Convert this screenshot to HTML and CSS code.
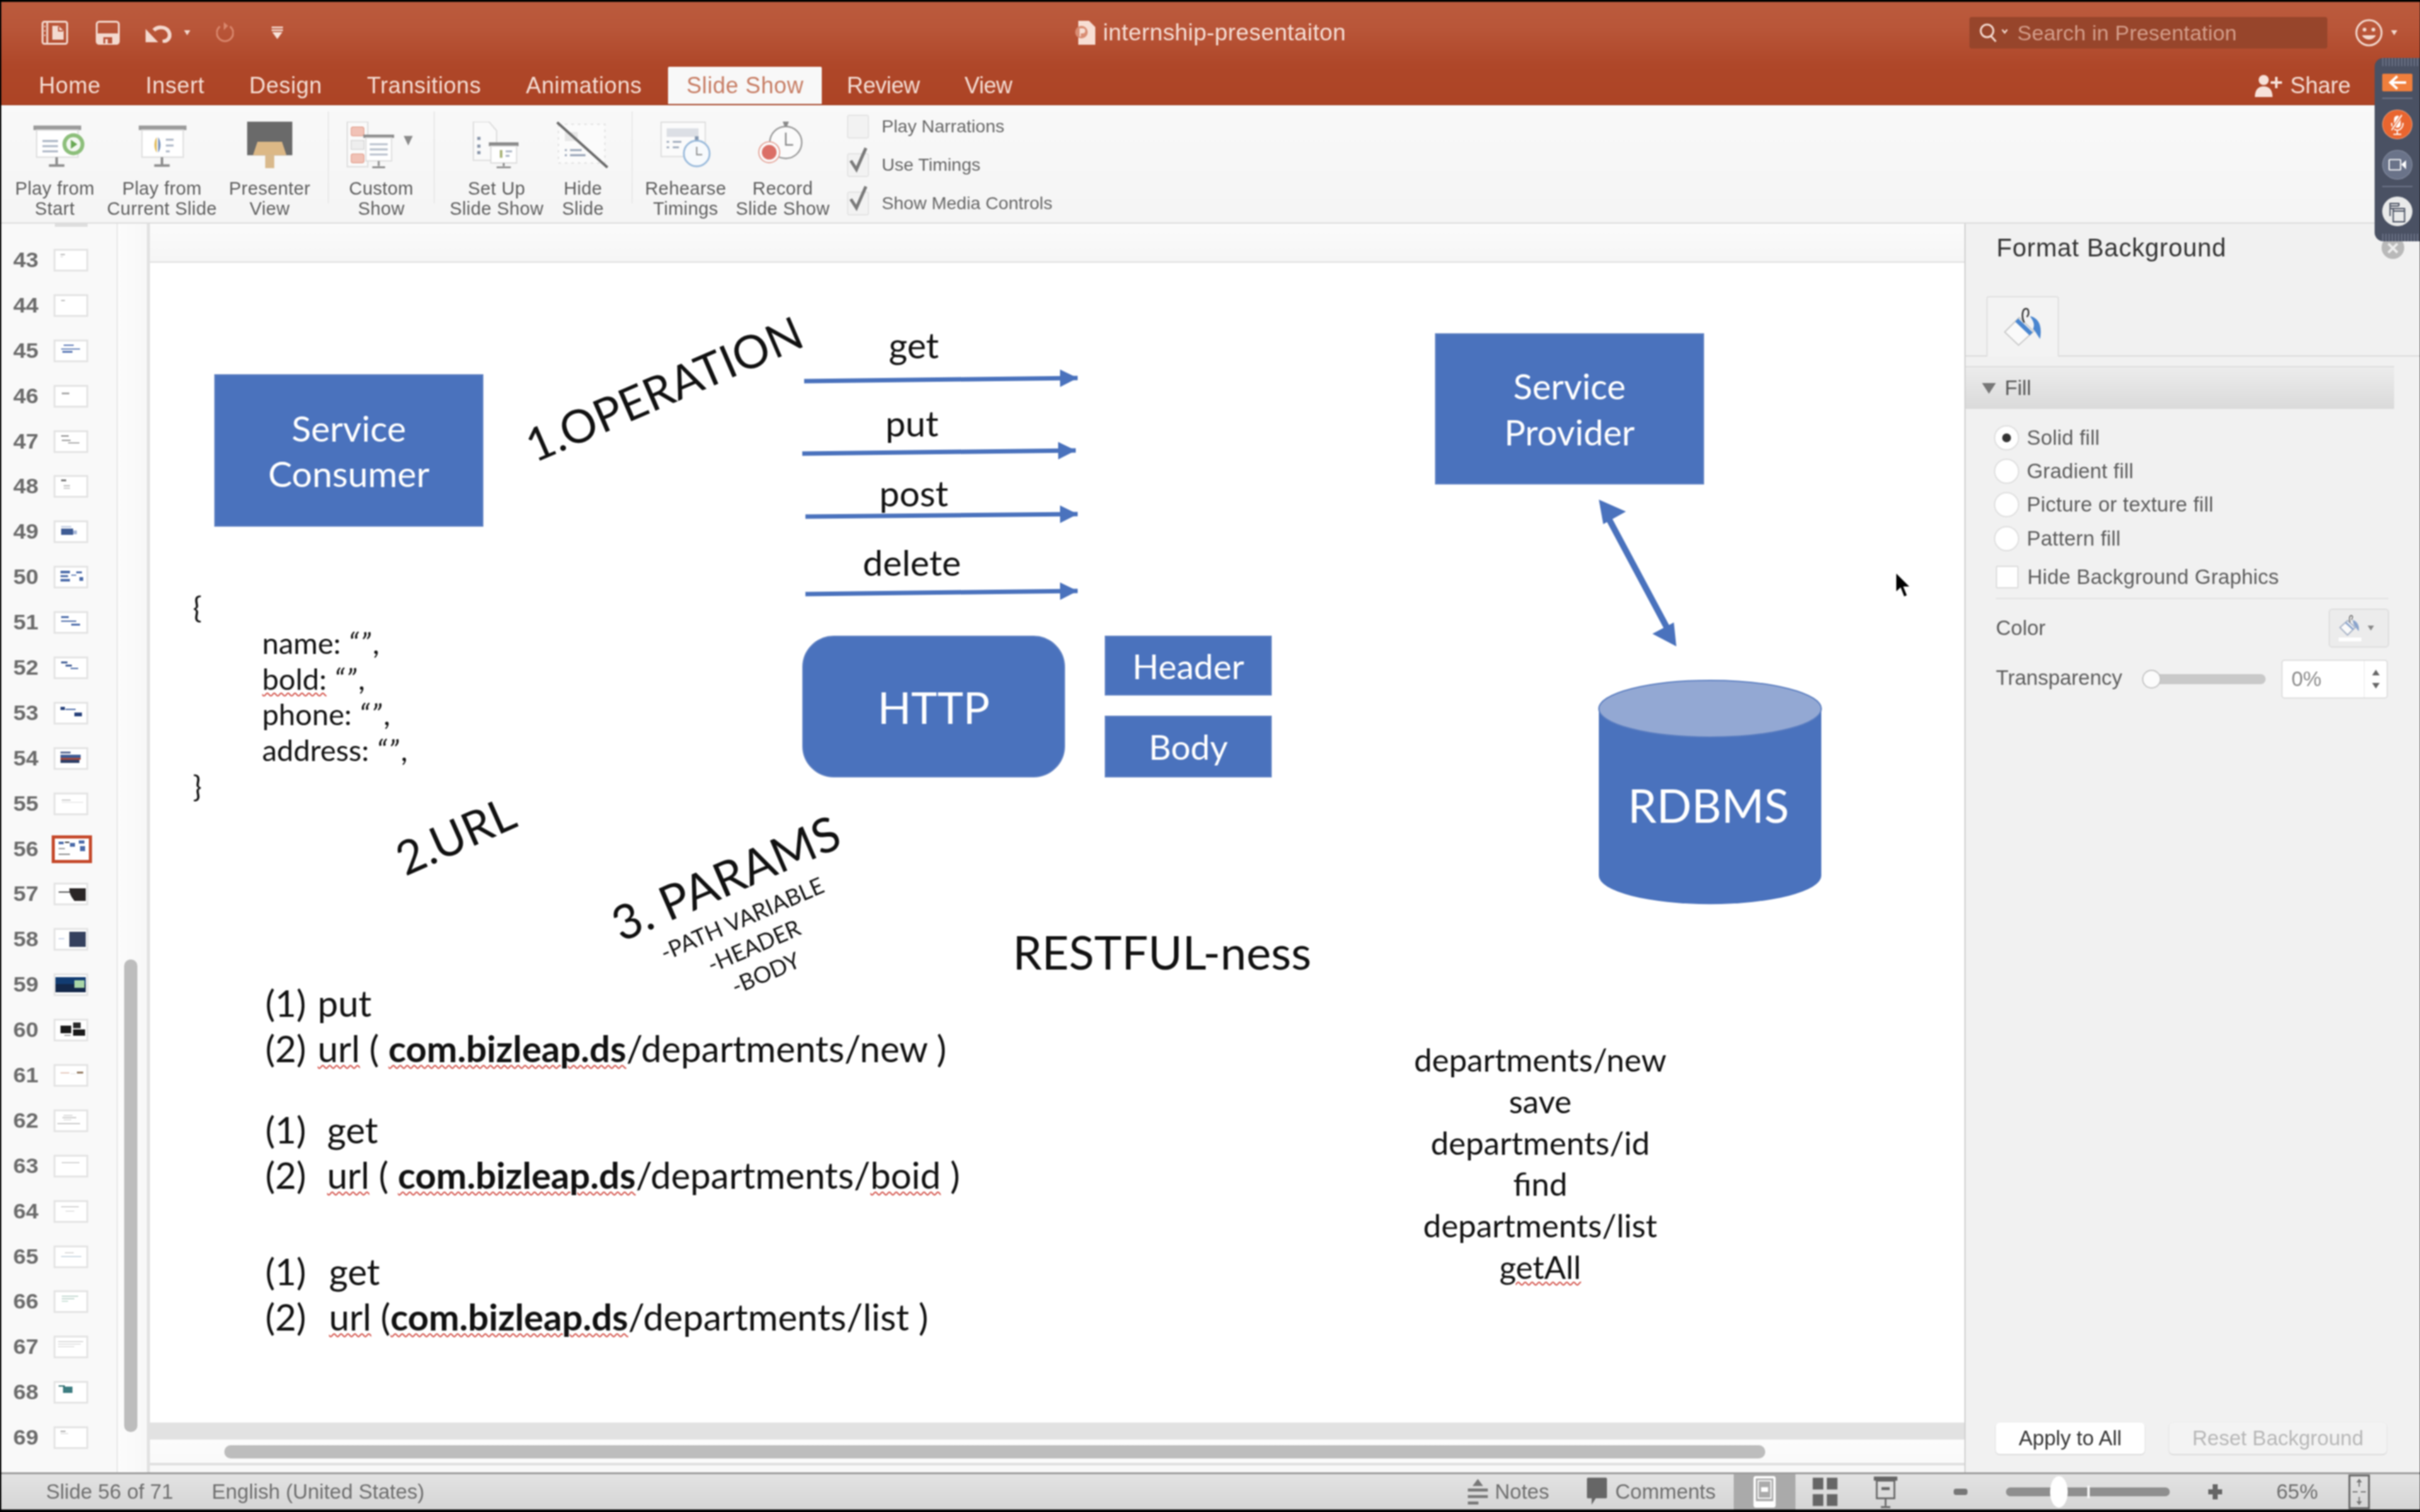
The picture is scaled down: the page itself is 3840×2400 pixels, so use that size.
FILE: index.html
```html
<!DOCTYPE html>
<html lang="en">
<head>
<meta charset="utf-8">
<title>internship-presentaiton</title>
<link rel="stylesheet" href="styles.css">
</head>
<body>
<div class="app">
  <header class="head">
    <div class="titlerow">
      <div class="qat">
        <svg class="q1" viewBox="0 0 42 38"><rect x="1.5" y="1.5" width="39" height="35" rx="3" fill="none" stroke="#f3d9cf" stroke-width="3"/><path d="M9 2v34" stroke="#f3d9cf" stroke-width="3"/><path d="M4 9h2M4 16h2M4 23h2" stroke="#f3d9cf" stroke-width="2"/><path d="M17 8h10l8 8v14H17z" fill="#f3d9cf"/><path d="M27 9v7h7" fill="none" stroke="#b9543a" stroke-width="2"/></svg>
        <svg class="q2" viewBox="0 0 38 38"><rect x="1.5" y="1.5" width="35" height="35" rx="4" fill="none" stroke="#f3d9cf" stroke-width="3"/><rect x="1.5" y="20" width="35" height="16" rx="3" fill="#f3d9cf"/><rect x="12" y="26" width="14" height="10" fill="#b9543a"/><rect x="15" y="29" width="4" height="7" fill="#f3d9cf"/></svg>
        <svg class="q3" viewBox="0 0 42 28"><path d="M14 8C20 2 32 2 37 9C42 17 38 25 28 26" fill="none" stroke="#f3d9cf" stroke-width="6"/><path d="M1 6L1 27L21 27z" fill="#f3d9cf"/></svg>
        <span class="tri q3d"></span>
        <svg class="q4" viewBox="0 0 28 36"><path d="M6 8A13 13 0 1 0 22 8" fill="none" stroke="#d8866c" stroke-width="3"/><path d="M12 1v13l7-7z" fill="#d8866c"/></svg>
        <svg class="q5" viewBox="0 0 22 20"><path d="M2 1.5h18M2 6h18" stroke="#f7e2da" stroke-width="2.5"/><path d="M3 9h16l-8 11z" fill="#f7e2da"/></svg>
      </div>
      <div class="doc">
        <svg class="docicon" viewBox="0 0 32 38"><path d="M5 0h17l10 10v28H5z" fill="#f7ded4"/><circle cx="10" cy="18" r="10" fill="#d98d74"/><path d="M7 12h5a4 4 0 0 1 0 8H9v5H7z" fill="#f7ded4"/></svg>
        <span class="doctitle">internship-presentaiton</span>
      </div>
      <div class="rightbar">
        <div class="search">
          <svg class="mag" viewBox="0 0 46 30"><circle cx="12" cy="12" r="10" fill="none" stroke="#f3d9cf" stroke-width="3"/><path d="M18 20l8 9" stroke="#f3d9cf" stroke-width="3"/><path d="M36 10l4 5 4-5" fill="none" stroke="#f3d9cf" stroke-width="2.5"/></svg>
          <span class="searchtext">Search in Presentation</span>
        </div>
        <svg class="smile" viewBox="0 0 44 44"><circle cx="22" cy="22" r="20" fill="none" stroke="#f3d9cf" stroke-width="3"/><circle cx="15" cy="17" r="3" fill="#f3d9cf"/><circle cx="29" cy="17" r="3" fill="#f3d9cf"/><path d="M11 26c4 9 18 9 22 0z" fill="#f3d9cf"/></svg>
        <span class="tri smiled"></span>
      </div>
    </div>
    <div class="tabsrow">
      <nav class="tabs">
        <span class="tab">Home</span>
        <span class="tab">Insert</span>
        <span class="tab">Design</span>
        <span class="tab">Transitions</span>
        <span class="tab">Animations</span>
        <span class="tab active">Slide Show</span>
        <span class="tab tight">Review</span>
        <span class="tab tight">View</span>
      </nav>
      <div class="share">
        <svg class="shareicon" viewBox="0 0 46 36"><circle cx="15" cy="9" r="8" fill="#f7e2da"/><path d="M1 36c0-12 6-17 14-17s14 5 14 17z" fill="#f7e2da"/><path d="M35 4v18M26 13h18" stroke="#f7e2da" stroke-width="4"/></svg>
        <span>Share</span>
      </div>
    </div>
  </header>

  <section class="ribbon">
    <div class="rb w170">
      <svg class="rbi first" viewBox="0 0 84 72"><rect x="2" y="6" width="74" height="7" fill="#9a9a9a"/><rect x="7" y="13" width="64" height="42" fill="#fff" stroke="#ddd" stroke-width="2"/><path d="M16 30h24M16 38h24M16 46h24" stroke="#aab4c4" stroke-width="3"/><circle cx="64" cy="35" r="17" fill="#8dbf7b"/><circle cx="64" cy="35" r="11" fill="#f4f8f2"/><path d="M60 28l10 7-10 7z" fill="#6aa955"/><path d="M38 55v11M26 68h24" stroke="#8d8d8d" stroke-width="4"/></svg>
      <span class="rbl">Play from<br>Start</span>
    </div>
    <div class="rb w170">
      <svg class="rbi" viewBox="0 0 84 72"><rect x="6" y="6" width="74" height="7" fill="#9a9a9a"/><rect x="11" y="13" width="64" height="42" fill="#fff" stroke="#ddd" stroke-width="2"/><path d="M34 24c-5 6-5 18 0 24z" fill="#e2bd5f"/><path d="M36 24c5 6 5 18 0 24z" fill="#7791ba"/><path d="M48 28h12M48 37h12M48 46h6" stroke="#aab4c4" stroke-width="3"/><path d="M42 55v11M30 68h24" stroke="#8d8d8d" stroke-width="4"/></svg>
      <span class="rbl">Play from<br>Current Slide</span>
    </div>
    <div class="rb w172">
      <svg class="rbi" viewBox="0 0 84 72"><rect x="7" y="0" width="70" height="52" fill="#6a6a6a"/><path d="M23 31h38l7 21H16z" fill="#dcb886"/><rect x="35" y="52" width="14" height="20" fill="#d9b98c"/></svg>
      <span class="rbl">Presenter<br>View</span>
    </div>
    <i class="rsep"></i>
    <div class="rb w154">
      <svg class="rbi wide" viewBox="0 0 110 72"><rect x="2" y="0" width="32" height="70" fill="#fafafa" stroke="#ddd" stroke-width="2"/><rect x="8" y="8" width="20" height="14" rx="3" fill="#f1c2b6" stroke="#dd8f7b"/><rect x="8" y="29" width="20" height="14" fill="#eee" stroke="#ccc"/><rect x="8" y="50" width="20" height="14" rx="3" fill="#f1c2b6" stroke="#dd8f7b"/><rect x="27" y="20" width="48" height="5" fill="#8a8a8a"/><rect x="31" y="25" width="40" height="36" fill="#fff" stroke="#ddd" stroke-width="2"/><path d="M37 35h28M37 43h28M37 51h28" stroke="#b7bfcc" stroke-width="3"/><path d="M51 61v8M41 71h20" stroke="#8d8d8d" stroke-width="3"/><path d="M90 22h14l-7 15z" fill="#8a8a8a"/></svg>
      <span class="rbl">Custom<br>Show</span>
    </div>
    <i class="rsep"></i>
    <div class="rb w184">
      <svg class="rbi" viewBox="0 0 84 72"><path d="M6 0h24l12 14v46H6z" fill="#fafafa" stroke="#ddd" stroke-width="2"/><path d="M12 26h5M12 38h5M12 48h5" stroke="#8794a8" stroke-width="5"/><rect x="30" y="32" width="46" height="6" fill="#8a8a8a"/><rect x="33" y="38" width="40" height="26" fill="#fff" stroke="#ddd" stroke-width="2"/><rect x="47" y="44" width="4" height="12" fill="#a9b377"/><path d="M56 46h10M56 53h6" stroke="#aab4c4" stroke-width="3"/><path d="M53 64v5M42 71h22" stroke="#8d8d8d" stroke-width="3"/></svg>
      <span class="rbl">Set Up<br>Slide Show</span>
    </div>
    <div class="rb w90">
      <svg class="rbi" viewBox="0 0 84 72"><rect x="4" y="4" width="72" height="60" fill="#fbfbfb" stroke="#e0e0e0" stroke-width="2" stroke-dasharray="4 6"/><rect x="14" y="16" width="20" height="14" fill="#e8e8e8"/><path d="M14 44h3M22 44h18M14 52h3M22 52h24" stroke="#99a5b8" stroke-width="3"/><path d="M2 1l78 70" stroke="#6b6b6b" stroke-width="4"/></svg>
      <span class="rbl">Hide<br>Slide</span>
    </div>
    <i class="rsep"></i>
    <div class="rb w156">
      <svg class="rbi" viewBox="0 0 84 76"><rect x="2" y="1" width="72" height="56" fill="#fbfbfb" stroke="#ddd" stroke-width="2"/><rect x="11" y="11" width="52" height="14" fill="#dcdfe5"/><path d="M11 33h4M21 33h14M11 42h4M21 42h10" stroke="#99a5b8" stroke-width="3"/><circle cx="60" cy="52" r="21" fill="#f7fafd" stroke="#9bbbdc" stroke-width="3"/><path d="M57 24h6v6h-6z" fill="#8295ad"/><path d="M60 41v13h9" fill="none" stroke="#8a8a8a" stroke-width="2"/></svg>
      <span class="rbl">Rehearse<br>Timings</span>
    </div>
    <div class="rb w152">
      <svg class="rbi" viewBox="0 0 84 76"><circle cx="47" cy="34" r="26" fill="#fbfbfb" stroke="#9a9a9a" stroke-width="2.5"/><path d="M42 0h10l-3 8h-4z" fill="#8a8a8a"/><path d="M47 18v20h12" fill="none" stroke="#8a8a8a" stroke-width="2.5"/><circle cx="20" cy="50" r="17" fill="#fbfbfb" stroke="#e4a296" stroke-width="2"/><circle cx="20" cy="50" r="12" fill="#db6f66"/></svg>
      <span class="rbl">Record<br>Slide Show</span>
    </div>
    <div class="checks">
      <label class="chk"><span class="cb"></span><span>Play Narrations</span></label>
      <label class="chk"><span class="cb"><svg class="tick" viewBox="0 0 36 44"><path d="M6 22l9 14 15-34" fill="none" stroke="#7a7a7a" stroke-width="5"/></svg></span><span>Use Timings</span></label>
      <label class="chk"><span class="cb"><svg class="tick" viewBox="0 0 36 44"><path d="M6 22l9 14 15-34" fill="none" stroke="#7a7a7a" stroke-width="5"/></svg></span><span>Show Media Controls</span></label>
    </div>
  </section>

  <main class="main">
    <aside class="thumbs">
      <div class="cut"></div>
      <div class="row"><b>43</b><span class="th"><svg viewBox="0 0 49 30"><rect x="8" y="5" width="7" height="2" fill="#bbb"/><rect x="8" y="9" width="4" height="1" fill="#ccc"/></svg></span></div>
      <div class="row"><b>44</b><span class="th"><svg viewBox="0 0 49 30"><rect x="9" y="6" width="6" height="2" fill="#bbb"/></svg></span></div>
      <div class="row"><b>45</b><span class="th"><svg viewBox="0 0 49 30"><rect x="13" y="5" width="16" height="2" fill="#5a78b5"/><rect x="9" y="11" width="30" height="2" fill="#6a86bd"/><rect x="11" y="15" width="16" height="3" fill="#5a78b5"/></svg></span></div>
      <div class="row"><b>46</b><span class="th"><svg viewBox="0 0 49 30"><rect x="10" y="9" width="12" height="3" fill="#aaa"/></svg></span></div>
      <div class="row"><b>47</b><span class="th"><svg viewBox="0 0 49 30"><rect x="9" y="5" width="12" height="2" fill="#888"/><rect x="10" y="12" width="14" height="2" fill="#999"/><rect x="20" y="16" width="18" height="2" fill="#aaa"/></svg></span></div>
      <div class="row"><b>48</b><span class="th"><svg viewBox="0 0 49 30"><rect x="9" y="4" width="8" height="3" fill="#777"/><rect x="13" y="13" width="10" height="2" fill="#bbb"/><rect x="13" y="17" width="10" height="2" fill="#ccc"/></svg></span></div>
      <div class="row"><b>49</b><span class="th"><svg viewBox="0 0 49 30"><rect x="9" y="6" width="16" height="2" fill="#b8c4dc"/><rect x="9" y="10" width="19" height="10" fill="#3f5c94"/><rect x="28" y="13" width="6" height="6" fill="#a8b8d8"/></svg></span></div>
      <div class="row"><b>50</b><span class="th"><svg viewBox="0 0 49 30"><rect x="8" y="5" width="15" height="4" fill="#4a6aa8"/><rect x="8" y="12" width="12" height="3" fill="#4a6aa8"/><rect x="8" y="18" width="15" height="4" fill="#4a6aa8"/><rect x="25" y="11" width="8" height="2" fill="#6a86bd"/><rect x="33" y="6" width="9" height="3" fill="#4a6aa8"/><rect x="38" y="15" width="6" height="6" fill="#4a6aa8"/></svg></span></div>
      <div class="row"><b>51</b><span class="th"><svg viewBox="0 0 49 30"><rect x="9" y="5" width="12" height="3" fill="#4a6aa8"/><rect x="9" y="12" width="24" height="2" fill="#4a6aa8"/><rect x="25" y="17" width="14" height="3" fill="#4a6aa8"/></svg></span></div>
      <div class="row"><b>52</b><span class="th"><svg viewBox="0 0 49 30"><rect x="9" y="5" width="10" height="3" fill="#3f5c94"/><rect x="16" y="10" width="10" height="3" fill="#3f5c94"/><rect x="24" y="15" width="12" height="2" fill="#4a6aa8"/></svg></span></div>
      <div class="row"><b>53</b><span class="th"><svg viewBox="0 0 49 30"><rect x="8" y="5" width="7" height="5" fill="#27417a"/><rect x="16" y="8" width="16" height="2" fill="#4a6aa8"/><rect x="30" y="14" width="12" height="6" fill="#27417a"/></svg></span></div>
      <div class="row"><b>54</b><span class="th"><svg viewBox="0 0 49 30"><rect x="8" y="4" width="16" height="3" fill="#5a6c94"/><rect x="8" y="9" width="32" height="5" fill="#3f5c94"/><rect x="8" y="14" width="32" height="3" fill="#a8483a"/><rect x="8" y="17" width="30" height="5" fill="#2f3f66"/></svg></span></div>
      <div class="row"><b>55</b><span class="th"><svg viewBox="0 0 49 30"><rect x="10" y="8" width="14" height="2" fill="#ccc"/><rect x="10" y="12" width="34" height="1" fill="#ddd"/></svg></span></div>
      <div class="row current"><b>56</b><span class="th"><svg viewBox="0 0 54 34"><rect x="6" y="5" width="8" height="4" fill="#4a6aa8"/><rect x="16" y="5" width="7" height="2" fill="#333"/><rect x="24" y="7" width="8" height="6" fill="#4a6aa8"/><rect x="38" y="3" width="9" height="5" fill="#4a6aa8"/><rect x="40" y="12" width="8" height="8" fill="#4a6aa8"/><rect x="6" y="15" width="10" height="2" fill="#999"/><rect x="6" y="24" width="18" height="2" fill="#888"/></svg></span></div>
      <div class="row"><b>57</b><span class="th"><svg viewBox="0 0 49 30"><rect x="5" y="11" width="18" height="2" fill="#555"/><path d="M22 6h26v20H30c-4-6-8-10-8-20z" fill="#2a2626"/></svg></span></div>
      <div class="row"><b>58</b><span class="th"><svg viewBox="0 0 49 30"><rect x="5" y="13" width="9" height="2" fill="#c9d4ea"/><rect x="22" y="3" width="26" height="24" fill="#35415e"/></svg></span></div>
      <div class="row"><b>59</b><span class="th"><svg viewBox="0 0 49 30"><rect x="0" y="3" width="48" height="24" fill="#123c72"/><rect x="0" y="14" width="48" height="13" fill="#14284a"/><rect x="30" y="8" width="16" height="12" fill="#a9d6a8"/></svg></span></div>
      <div class="row"><b>60</b><span class="th"><svg viewBox="0 0 49 30"><rect x="8" y="8" width="17" height="12" fill="#1a1a1a"/><rect x="28" y="3" width="12" height="9" fill="#2a2a2a"/><rect x="28" y="14" width="19" height="10" fill="#1a1a1a"/><rect x="14" y="23" width="10" height="1" fill="#555"/></svg></span></div>
      <div class="row"><b>61</b><span class="th"><svg viewBox="0 0 49 30"><rect x="8" y="10" width="14" height="2" fill="#e5c9bc"/><rect x="24" y="12" width="8" height="1" fill="#ddd"/><rect x="34" y="9" width="10" height="3" fill="#90765c"/></svg></span></div>
      <div class="row"><b>62</b><span class="th"><svg viewBox="0 0 49 30"><rect x="13" y="6" width="14" height="1" fill="#bbb"/><rect x="11" y="9" width="22" height="2" fill="#ccc"/><rect x="13" y="13" width="12" height="1" fill="#ccc"/><rect x="3" y="19" width="36" height="1" fill="#999"/></svg></span></div>
      <div class="row"><b>63</b><span class="th"><svg viewBox="0 0 49 30"><rect x="10" y="9" width="28" height="1" fill="#aaa"/></svg></span></div>
      <div class="row"><b>64</b><span class="th"><svg viewBox="0 0 49 30"><rect x="9" y="7" width="28" height="1" fill="#aaa"/><rect x="16" y="14" width="14" height="1" fill="#ccc"/></svg></span></div>
      <div class="row"><b>65</b><span class="th"><svg viewBox="0 0 49 30"><rect x="15" y="8" width="14" height="1" fill="#bbb"/><rect x="9" y="14" width="32" height="1" fill="#9fb8c8"/></svg></span></div>
      <div class="row"><b>66</b><span class="th"><svg viewBox="0 0 49 30"><rect x="10" y="6" width="26" height="1" fill="#8fb8a8"/><rect x="10" y="10" width="20" height="1" fill="#8fb8a8"/><rect x="10" y="14" width="10" height="1" fill="#9fc8b8"/></svg></span></div>
      <div class="row"><b>67</b><span class="th"><svg viewBox="0 0 49 30"><rect x="4" y="6" width="40" height="1" fill="#bbb"/><rect x="4" y="10" width="36" height="1" fill="#ccc"/><rect x="4" y="14" width="26" height="1" fill="#ccc"/></svg></span></div>
      <div class="row"><b>68</b><span class="th"><svg viewBox="0 0 49 30"><rect x="5" y="4" width="10" height="2" fill="#2c6b6b"/><rect x="12" y="6" width="15" height="10" fill="#3c7c80"/></svg></span></div>
      <div class="row"><b>69</b><span class="th"><svg viewBox="0 0 49 30"><rect x="8" y="4" width="8" height="2" fill="#aaa"/><rect x="8" y="8" width="12" height="1" fill="#ccc"/></svg></span></div>
    </aside>
    <div class="vscroll"><div class="vthumb"></div></div>

    <div class="editor">
      <div class="stagetop"></div>
      <div class="slide">
        <svg class="lines" viewBox="238 417 2879 1841">
          <defs>
            <marker id="ah" markerWidth="5" markerHeight="5" refX="4" refY="2" orient="auto-start-reverse"><path d="M0 0L4 2L0 4z" fill="#4a72bd"/></marker>
          </defs>
          <path class="ln1" d="M1276 605L1710 600" marker-end="url(#ah)"/>
          <path class="ln1" d="M1273 720L1707 715" marker-end="url(#ah)"/>
          <path class="ln1" d="M1278 820L1710 816" marker-end="url(#ah)"/>
          <path class="ln1" d="M1278 943L1710 938" marker-end="url(#ah)"/>
          <path class="ln2" d="M2552 822L2646 998"/>
          <path d="M2537 793L2580 812L2544 832z" fill="#4a72bd"/>
          <path d="M2660 1026L2622 1006L2656 988z" fill="#4a72bd"/>
          <path d="M2537 1125V1390A176 45 0 0 0 2890 1390V1125z" fill="#4a72bd"/>
          <ellipse cx="2713.5" cy="1125" rx="176.5" ry="45" fill="#93a8d3" stroke="#5a7dc0" stroke-width="2"/>
        </svg>

        <div class="box consumer">Service<br>Consumer</div>
        <div class="box provider">Service<br>Provider</div>
        <div class="box http">HTTP</div>
        <div class="box hdr">Header</div>
        <div class="box bdy">Body</div>
        <div class="rdb">RDBMS</div>

        <div class="rot op">1.OPERATION</div>
        <div class="rot url">2.URL</div>
        <div class="rot par">3. PARAMS</div>
        <div class="rot sub">-PATH VARIABLE<br>-HEADER<br>-BODY</div>

        <div class="verb v1">get</div>
        <div class="verb v2">put</div>
        <div class="verb v3">post</div>
        <div class="verb v4">delete</div>

        <div class="json">
          <p>{</p>
          <p class="ind">name: <span class="q">“”</span>,</p>
          <p class="ind"><span class="sp">bold:</span> <span class="q">“”</span>,</p>
          <p class="ind">phone: <span class="q">“”</span>,</p>
          <p class="ind">address: <span class="q">“”</span>,</p>
          <p>}</p>
        </div>

        <div class="rest">RESTFUL-ness</div>

        <div class="list l1">
          <p><span class="num n1">(1)</span>put</p>
          <p><span class="num n1">(2)</span><span class="sp">url</span> ( <b class="sp">com.bizleap.ds</b>/departments/new )</p>
        </div>
        <div class="list l2">
          <p><span class="num n2">(1)</span>get</p>
          <p><span class="num n2">(2)</span><span class="sp">url</span> ( <b class="sp">com.bizleap.ds</b>/departments/<span class="sp">boid</span> )</p>
        </div>
        <div class="list l3">
          <p><span class="num n3">(1)</span>get</p>
          <p><span class="num n3">(2)</span><span class="sp">url</span> (<b class="sp">com.bizleap.ds</b>/departments/list )</p>
        </div>

        <div class="paths">
          <p>departments/new</p>
          <p>save</p>
          <p>departments/id</p>
          <p>find</p>
          <p>departments/list</p>
          <p><span class="sp">getAll</span></p>
        </div>

        <svg class="cursor" viewBox="0 0 32 46"><path d="M3 2V35L10.500 28L16 42L22 39.500L16.500 26H27z" fill="#000" stroke="#fff" stroke-width="2"/></svg>
      </div>
      <div class="hband"></div>
      <div class="hscroll"><div class="hthumb"></div></div>
    </div>

    <aside class="pane">
      <div class="panehead">
        <span class="panetitle">Format Background</span>
        <span class="paneclose">×</span>
      </div>
      <div class="panetabs">
        <div class="panetab">
          <svg class="bucket" viewBox="0 0 62 62"><path d="M2 39L25 16L48 38L24 60z" fill="#fafafa" stroke="#c9c9c9" stroke-width="2"/><path d="M21 20L44 42" stroke="#4a86d0" stroke-width="7"/><path d="M33 24C28 14 30 2 36 2C41 2 41 12 37 15" fill="none" stroke="#333" stroke-width="2.500"/><path d="M42 14C56 16 62 30 58 50C54 44 52 40 47 34C50 28 48 22 42 14z" fill="#4a86d0"/></svg>
        </div>
      </div>
      <div class="fillbar"><span class="tri filltri"></span><span>Fill</span></div>
      <div class="fills">
        <div class="opt"><span class="radio on"></span><span>Solid fill</span></div>
        <div class="opt"><span class="radio"></span><span>Gradient fill</span></div>
        <div class="opt"><span class="radio"></span><span>Picture or texture fill</span></div>
        <div class="opt"><span class="radio"></span><span>Pattern fill</span></div>
        <div class="opt hide"><span class="square"></span><span>Hide Background Graphics</span></div>
      </div>
      <div class="panesep"></div>
      <div class="colorrow">
        <span>Color</span>
        <div class="colorbtn">
          <svg class="bucketsm" viewBox="0 0 36 42"><path d="M2 20L14 9L26 20L14 32z" fill="#fafafa" stroke="#a9b4c8" stroke-width="2"/><path d="M11 12L23 23" stroke="#8aa4cc" stroke-width="3"/><path d="M18 12C16 6 17 1 20 1C23 1 22 6 20 8" fill="none" stroke="#666" stroke-width="1.500"/><path d="M22 8C30 10 33 18 32 26C28 22 26 18 24 16z" fill="#8aa4cc"/><rect x="0" y="36" width="36" height="6" fill="#fff"/></svg>
          <span class="tri colortri"></span>
        </div>
      </div>
      <div class="transrow">
        <span class="translabel">Transparency</span>
        <div class="track"><span class="knob"></span></div>
        <div class="pct">
          <span class="pctval">0%</span>
          <span class="stepper"><span class="up"></span><span class="dn"></span></span>
        </div>
      </div>
      <div class="panebtns">
        <span class="pbtn apply">Apply to All</span>
        <span class="pbtn reset">Reset Background</span>
      </div>
    </aside>
  </main>

  <footer class="status">
    <span class="stat s1">Slide 56 of 71</span>
    <span class="stat s2">English (United States)</span>
    <div class="stright">
      <svg class="sic notesic" viewBox="0 0 34 60"><path d="M17 8l9 12H8z" fill="#777"/><path d="M0 27h34M0 38h34" stroke="#777" stroke-width="5"/><path d="M0 49h18" stroke="#777" stroke-width="5"/></svg>
      <span class="stat notes">Notes</span>
      <svg class="sic commic" viewBox="0 0 36 60"><path d="M3 6h30a2 2 0 0 1 2 2V39a2 2 0 0 1-2 2H16L9 52V41H3a2 2 0 0 1-2-2V8a2 2 0 0 1 2-2z" fill="#666"/></svg>
      <span class="stat comments">Comments</span>
      <div class="viewon"><svg class="vn" viewBox="0 0 38 54"><rect x="2" y="2" width="34" height="50" rx="2" fill="none" stroke="#fff" stroke-width="4"/><rect x="8" y="8" width="22" height="30" fill="none" stroke="#fff" stroke-width="2"/><rect x="13" y="19" width="12" height="8" fill="#fff"/><rect x="2" y="43" width="34" height="9" fill="#fff"/></svg></div>
      <svg class="sic gridic" viewBox="0 0 42 60"><rect x="0" y="6" width="18" height="20" fill="#666"/><rect x="24" y="6" width="18" height="20" fill="#666"/><rect x="0" y="34" width="18" height="20" fill="#666"/><rect x="24" y="34" width="18" height="20" fill="#666"/></svg>
      <svg class="sic presic" viewBox="0 0 40 60"><rect x="0" y="4" width="40" height="7" fill="#666"/><rect x="5" y="11" width="30" height="30" fill="none" stroke="#666" stroke-width="3"/><path d="M13 22h14v5H13z" fill="#666"/><path d="M20 41v13M12 56h16" stroke="#666" stroke-width="3"/></svg>
      <i class="zminus"></i>
      <div class="zslider"><i class="ztick"></i><i class="zknob"></i></div>
      <i class="zplus"></i>
      <span class="stat zoomv">65%</span>
      <svg class="sic fitic" viewBox="0 0 35 56"><rect x="2" y="2" width="31" height="52" fill="none" stroke="#666" stroke-width="3"/><path d="M17.500 8v12M17.500 36v12M7 28h8M20 28h8" stroke="#777" stroke-width="2"/><path d="M13 13l4.500-6 4.500 6zM13 43l4.500 6 4.500-6z" fill="#777"/></svg>
    </div>
  </footer>

  <div class="floatbar">
    <div class="grip"></div>
    <div class="fb back"><svg viewBox="0 0 48 28"><path d="M38 14H14M24 4L13 14l11 10" fill="none" stroke="#fff" stroke-width="4"/></svg></div>
    <div class="fbsep"></div>
    <div class="fb circ mic"><svg viewBox="0 0 47 47"><rect x="18" y="9" width="11" height="20" rx="5.500" fill="#fff"/><path d="M14 21c0 16 19 16 19 0M23.500 33v6M17 40h13" fill="none" stroke="#fff" stroke-width="2"/><path d="M14 33L31 8" stroke="#e9652f" stroke-width="5"/><path d="M14 33L31 8" stroke="#fff" stroke-width="2"/></svg></div>
    <div class="fb circ cam"><svg viewBox="0 0 47 47"><rect x="10" y="15" width="19" height="17" rx="1" fill="none" stroke="#fff" stroke-width="2"/><path d="M30 23l8-7v15z" fill="#fff"/></svg></div>
    <div class="fbsep"></div>
    <div class="fb circ copy"><svg viewBox="0 0 47 47"><path d="M12 31V11h14v4" fill="none" stroke="#454c5e" stroke-width="2"/><path d="M12 15h14M12 19h5" stroke="#454c5e" stroke-width="2"/><rect x="17" y="19" width="18" height="21" fill="none" stroke="#454c5e" stroke-width="2"/><path d="M17 23h18" stroke="#454c5e" stroke-width="2"/></svg></div>
    <div class="grip low"></div>
  </div>
</div>
</body>
</html>
```

FILE: styles.css
```css
* { box-sizing: border-box; }
html, body { margin: 0; padding: 0; background: #000; }
p { margin: 0; }
svg { display: block; }

.app {
  position: relative;
  width: 3840px;
  height: 2400px;
  padding: 3px 0 4px 2px;
  display: flex;
  flex-direction: column;
  background: #000;
  overflow: hidden;
  font-family: "Liberation Sans", Arial, sans-serif;
  filter: blur(1.1px);
}

/* title + tabs */
.head {
  height: 164px;
  flex: none;
  background: linear-gradient(180deg, #bb5b3d 0%, #b95639 25%, #af4729 62%, #ad4425 100%);
  border-bottom: 2px solid #a33f21;
  color: #f5ded5;
}
.titlerow {
  height: 98px;
  display: grid;
  grid-template-columns: 1fr auto 1fr;
  align-items: center;
}
.qat { display: flex; align-items: center; padding-left: 64px; }
.q1 { width: 42px; height: 38px; }
.q2 { width: 38px; height: 38px; margin-left: 44px; }
.q3 { width: 42px; height: 28px; margin-left: 40px; margin-top: 4px; }
.q3d { margin-left: 20px; }
.q4 { width: 28px; height: 36px; margin-left: 41px; }
.q5 { width: 22px; height: 20px; margin-left: 58px; }
.tri {
  display: block;
  width: 0;
  height: 0;
  border-left: 5px solid transparent;
  border-right: 5px solid transparent;
  border-top: 8px solid #f3d9cf;
}
.doc { display: flex; align-items: center; gap: 12px; }
.docicon { width: 32px; height: 38px; }
.doctitle { font-size: 37px; letter-spacing: 0.4px; color: #f5ded5; }
.rightbar { display: flex; align-items: center; justify-content: flex-end; padding-right: 36px; }
.search {
  width: 568px;
  height: 50px;
  background: #97452b;
  border-radius: 4px;
  display: flex;
  align-items: center;
  padding-left: 16px;
}
.mag { width: 46px; height: 30px; }
.searchtext { font-size: 34px; letter-spacing: 0.200px; color: #d49e8b; margin-left: 14px; white-space: nowrap; }
.smile { width: 44px; height: 44px; margin-left: 44px; }
.smiled { margin-left: 13px; }

.tabsrow { height: 64px; display: flex; align-items: flex-end; justify-content: space-between; }
.tabs { display: flex; padding-left: 24px; }
.tab {
  height: 59px;
  padding: 8px 35.500px 0;
  font-size: 36px;
  line-height: 44px;
  letter-spacing: 0.6px;
  color: #f5ded5;
}
.tab.tight { letter-spacing: -0.400px; }
.tab.active {
  background: #f8f8f8;
  color: #c77d64;
  padding: 8px 29px 0;
  margin: 0 4px 0 6px;
  border-radius: 2px 2px 0 0;
}
.share { display: flex; align-items: center; gap: 11px; height: 59px; padding-right: 110px; font-size: 36px; }
.shareicon { width: 46px; height: 36px; }

/* ribbon */
.ribbon {
  height: 188px;
  flex: none;
  display: flex;
  background: linear-gradient(180deg, #f9f9f9, #f5f5f5);
  border-bottom: 2px solid #dcdcdc;
}
.rb { display: flex; flex-direction: column; align-items: center; padding-top: 26px; }
.rbi { height: 74px; width: 86px; }
.rbi.first { margin-left: 14px; }
.rbi.wide { width: 112px; }
.rbl { margin-top: 16px; font-size: 29px; letter-spacing: 0.4px; line-height: 32px; text-align: center; color: #5d5d5d; white-space: nowrap; }
.w170 { width: 170px; }
.w172 { width: 172px; }
.w154 { width: 154px; }
.w184 { width: 184px; }
.w90 { width: 90px; margin-right: 26px; }
.w156 { width: 156px; }
.w152 { width: 152px; }
.rsep { width: 2px; margin: 10px 6px 30px; background: #e8e8e8; }
.checks { margin-left: 26px; padding-top: 3px; }
.chk { height: 61px; display: flex; align-items: center; gap: 20px; font-size: 28.500px; color: #666; }
.cb {
  position: relative;
  width: 35px;
  height: 38px;
  background: #f2f2f2;
  border: 2px solid #e4e4e4;
  border-radius: 4px;
}
.tick { position: absolute; left: -2px; top: -12px; width: 36px; height: 44px; }

/* main */
.main { flex: 1; display: flex; min-height: 0; }
.thumbs {
  width: 185px;
  flex: none;
  padding-top: 0;
  background: #f9f9f9;
  border-right: 2px solid #e8e8e8;
  overflow: hidden;
}
.cut { width: 52px; height: 5px; margin: 0 0 17px 85px; background: #dedede; }
.row { height: 71.900px; display: flex; align-items: center; }
.row b { width: 78px; text-align: center; font-size: 36px; color: #6b6b6b; flex: none; transform: scaleY(0.92); }
.th {
  margin-left: 5px;
  width: 55px;
  height: 36px;
  background: #fff;
  border: 3px solid #e4e4e4;
  display: block;
}
.th svg { width: 100%; height: 100%; }
.current .th {
  margin-left: 2px;
  width: 64px;
  height: 44px;
  border: 5px solid #c5482a;
}

.vscroll {
  width: 51px;
  flex: none;
  padding: 1168px 0 0 10px;
  background: linear-gradient(90deg, #fcfcfc 0, #f8f8f8 46px, #e2e2e2 46px);
}
.vthumb { width: 21px; height: 750px; border-radius: 10px; background: #bdbdbd; }

.editor { width: 2879px; flex: none; display: flex; flex-direction: column; }
.stagetop { height: 62px; flex: none; background: linear-gradient(180deg, #fbfbfb, #f6f6f6); border-bottom: 2px solid #dfdfdf; }
.slide { position: relative; flex: 1; background: #fff; overflow: hidden; }
.hband { height: 27px; flex: none; background: #e2e2e2; }
.hscroll { height: 52px; flex: none; padding: 9px 0 0 118px; background: linear-gradient(180deg, #fcfcfc 0, #fafafa 72%, #dfdfdf 72%, #dfdfdf 78%, #f8f8f8 78%); }
.hthumb { width: 2445px; height: 21px; border-radius: 10px; background: #bdbdbd; }

/* slide canvas */
.lines { position: absolute; left: 0; top: 0; width: 2879px; height: 1841px; }
.ln1 { fill: none; stroke: #4a72bd; stroke-width: 7; }
.ln2 { fill: none; stroke: #4a72bd; stroke-width: 10; }
.box {
  position: absolute;
  display: flex;
  align-items: center;
  justify-content: center;
  text-align: center;
  background: #4a72bd;
  border: 2px solid #5e80c2;
  color: #fff;
  font-family: Lato, "Open Sans", sans-serif;
}
.consumer { left: 102px; top: 177px; width: 427px; height: 242px; font-size: 57px; line-height: 72px; }
.provider { left: 2039px; top: 112px; width: 427px; height: 240px; font-size: 56px; line-height: 73px; }
.http { left: 1035px; top: 592px; width: 417px; height: 225px; border-radius: 50px; font-size: 70px; }
.hdr { left: 1515px; top: 592px; width: 265px; height: 95px; font-size: 55px; }
.bdy { left: 1515px; top: 719px; width: 265px; height: 98px; font-size: 55px; }
.rdb {
  position: absolute;
  left: 2473px;
  top: 861px;
  transform: translate(-50%, -50%);
  color: #fff;
  font: 73px Lato, "Open Sans", sans-serif;
}
.rot {
  position: absolute;
  white-space: nowrap;
  color: #111;
  font-family: Lato, "Open Sans", sans-serif;
  text-align: center;
}
.op { left: 815px; top: 199px; font-size: 73px; transform: translate(-50%, -50%) rotate(-23.400deg); }
.url { left: 484px; top: 908px; font-size: 74px; transform: translate(-50%, -50%) rotate(-24deg); }
.par { left: 913px; top: 975px; font-size: 76px; transform: translate(-50%, -50%) rotate(-23.400deg); }
.sub { left: 958px; top: 1084px; font-size: 36px; line-height: 47px; transform: translate(-50%, -50%) rotate(-23.400deg); }
.verb {
  position: absolute;
  transform: translate(-50%, -50%);
  color: #111;
  font: 57px Lato, "Open Sans", sans-serif;
}
.v1 { left: 1212px; top: 130px; }
.v2 { left: 1209px; top: 254px; }
.v3 { left: 1212px; top: 365px; }
.v4 { left: 1209px; top: 475px; }
.json {
  position: absolute;
  left: 68px;
  top: 518px;
  color: #111;
  font: 47px/56.800px Lato, "Open Sans", sans-serif;
}
.ind { padding-left: 110px; }
.q { letter-spacing: 3px; font-style: italic; }
.sp { text-decoration: underline wavy #d0433a 2px; text-underline-offset: 4px; }
.rest {
  position: absolute;
  left: 1369px;
  top: 1057px;
  color: #111;
  font: 74px/1 Lato, "Open Sans", sans-serif;
  white-space: nowrap;
}
.list {
  position: absolute;
  left: 183px;
  color: #111;
  font: 58px/72px Lato, "Open Sans", sans-serif;
  white-space: nowrap;
}
.l1 { top: 1139px; }
.l2 { top: 1340px; }
.l3 { top: 1565px; }
.num { display: inline-block; }
.n1 { width: 83px; }
.n2 { width: 98px; }
.n3 { width: 101px; }
.paths {
  position: absolute;
  left: 1906px;
  top: 1232px;
  width: 600px;
  text-align: center;
  color: #111;
  font: 51px/65.800px Lato, "Open Sans", sans-serif;
}
.cursor { position: absolute; left: 2767px; top: 489px; width: 32px; height: 46px; }

/* right pane */
.pane {
  flex: 1;
  display: flex;
  flex-direction: column;
  background: #f1f1f1;
  border-left: 2px solid #cfcfcf;
  font-size: 33px;
  color: #5c5c5c;
}
.panehead { height: 76px; flex: none; display: flex; align-items: center; padding-left: 49px; }
.panetitle { font-size: 40px; letter-spacing: 0.8px; color: #333; }
.paneclose {
  position: absolute;
  left: 3779px;
  top: 375px;
  width: 36px;
  height: 36px;
  border-radius: 50%;
  background: #b9b9b9;
  color: #eee;
  font: bold 34px/36px "Liberation Sans", sans-serif;
  text-align: center;
}
.panetabs { height: 135px; flex: none; padding: 39px 0 0 33px; border-bottom: 2px solid #dadada; }
.panetab {
  width: 115px;
  height: 96px;
  display: flex;
  align-items: center;
  justify-content: center;
  background: #f3f3f3;
  border: 2px solid #e0e0e0;
  border-bottom: 0;
  border-radius: 4px 4px 0 0;
  margin-bottom: -2px;
}
.bucket { width: 62px; height: 62px; }
.fillbar {
  flex: none;
  margin-top: 15px;
  width: 680px;
  height: 68px;
  display: flex;
  align-items: center;
  gap: 14px;
  padding-left: 26px;
  background: linear-gradient(180deg, #ececec, #dadada);
  border-top: 2px solid #dedede;
  color: #555;
}
.filltri { border-left-width: 11px; border-right-width: 11px; border-top: 17px solid #777; }
.fills { padding: 19px 0 0 45px; flex: none; }
.opt { height: 53.300px; display: flex; align-items: center; gap: 12px; letter-spacing: 0.200px; }
.radio {
  position: relative;
  width: 40px;
  height: 40px;
  border-radius: 50%;
  background: #fff;
  border: 2px solid #dedede;
}
.radio.on::after {
  content: "";
  position: absolute;
  left: 11px;
  top: 11px;
  width: 14px;
  height: 14px;
  border-radius: 50%;
  background: #333;
}
.hide { margin-top: 8px; }
.square { width: 36px; height: 36px; margin: 0 2px 0 3px; background: #fff; border: 2px solid #dcdcdc; border-radius: 2px; }
.panesep { flex: none; height: 2px; margin: 7px 0 0 48px; width: 623px; background: #e2e2e2; }
.colorrow {
  flex: none;
  height: 62px;
  margin-top: 15px;
  padding: 0 49px 0 48px;
  display: flex;
  justify-content: space-between;
  align-items: center;
}
.colorbtn {
  width: 96px;
  height: 62px;
  display: flex;
  align-items: center;
  padding-left: 14px;
  gap: 10px;
  background: #ececec;
  border: 2px solid #dedede;
  border-radius: 6px;
}
.bucketsm { width: 36px; height: 42px; }
.colortri { border-top-color: #888; }
.transrow {
  flex: none;
  height: 62px;
  margin-top: 19px;
  padding-left: 48px;
  display: flex;
  align-items: center;
}
.translabel { width: 247px; margin-top: -4px; }
.track { position: relative; width: 181px; height: 16px; border-radius: 8px; background: #c9c9c9; }
.knob {
  position: absolute;
  left: -15px;
  top: -7px;
  width: 30px;
  height: 30px;
  border-radius: 50%;
  background: #fbfbfb;
  border: 2px solid #c4c4c4;
}
.pct {
  margin-left: 25px;
  width: 169px;
  height: 62px;
  display: flex;
  justify-content: space-between;
  align-items: center;
  background: #fff;
  border: 2px solid #dedede;
  border-radius: 5px;
  padding-left: 14px;
  color: #8a8a8a;
}
.stepper { width: 36px; height: 58px; display: flex; flex-direction: column; align-items: center; justify-content: center; gap: 12px; border-left: 1px solid #e6e6e6; }
.up, .dn { width: 0; height: 0; border-left: 6px solid transparent; border-right: 6px solid transparent; }
.up { border-bottom: 9px solid #666; }
.dn { border-top: 9px solid #666; }
.panebtns { margin-top: auto; padding: 0 0 29px 48px; display: flex; gap: 39px; }
.pbtn {
  height: 50px;
  display: flex;
  align-items: center;
  justify-content: center;
  border-radius: 6px;
  font-size: 33px;
  box-shadow: 0 1px 2px #c8c8c8;
}
.apply { width: 236px; background: #fff; color: #333; }
.reset { width: 345px; background: #f3f3f3; color: #b7b7b7; }

/* status */
.status {
  height: 59px;
  flex: none;
  display: flex;
  align-items: center;
  background: linear-gradient(180deg, #e3e3e3, #d5d5d5);
  border-top: 3px solid #9c9c9c;
}
.stat { font-size: 33px; color: #6e6e6e; white-space: nowrap; }
.s1 { margin-left: 71px; width: 263px; }
.stright { margin-left: auto; height: 100%; display: flex; align-items: center; padding-right: 79px; }
.sic { height: 56px; flex: none; }
.notesic { width: 34px; }
.notes { margin-left: 10px; width: 89px; }
.commic { width: 36px; margin-left: 55px; }
.comments { margin-left: 11px; width: 159px; }
.viewon { margin-left: 29px; width: 98px; height: 100%; display: flex; align-items: center; justify-content: center; background: #aaa; }
.vn { width: 36px; height: 50px; }
.gridic { width: 42px; margin-left: 26px; }
.presic { width: 40px; margin-left: 55px; }
.zminus { width: 22px; height: 10px; margin-left: 88px; background: #777; border-radius: 4px; }
.zslider { position: relative; width: 260px; height: 14px; margin-left: 61px; border-radius: 7px; background: #8f8f8f; }
.zknob { position: absolute; left: 70px; top: -18px; width: 28px; height: 50px; border-radius: 50%; background: #fff; }
.ztick { position: absolute; left: 129px; top: -3px; width: 4px; height: 20px; background: #f4f4f4; }
.zplus { position: relative; width: 22px; height: 8px; margin-left: 61px; background: #666; }
.zplus::after { content: ""; position: absolute; left: 7px; top: -8px; width: 8px; height: 24px; background: #666; }
.zoomv { margin-left: 86px; width: 65px; }
.fitic { width: 35px; margin-left: 49px; }

/* floating bar */
.floatbar {
  position: absolute;
  left: 3768px;
  top: 92px;
  width: 72px;
  height: 291px;
  padding-left: 12px;
  display: flex;
  flex-direction: column;
  background: #4a5163;
  border-radius: 14px 0 0 14px;
}
.grip {
  height: 18px;
  margin: 0 0 12px;
  background: repeating-linear-gradient(90deg, #6b7286 0, #6b7286 2px, #4a5163 2px, #4a5163 5px);
}
.grip.low { margin: 12px 0 0; }
.fb { width: 48px; flex: none; }
.fb svg { width: 100%; height: 100%; }
.back { height: 28px; background: #f07f3c; border-radius: 2px; }
.fbsep { height: 2px; margin: 10px 0 17px; width: 48px; background: #6d7488; flex: none; }
.circ { height: 47px; border-radius: 50%; }
.mic { background: #e9652f; border: 1px solid #f0a27e; }
.cam { margin-top: 17px; background: #6a7389; border: 1px solid #8b93a6; }
.copy { background: #e9eaea; }
.cam + .fbsep { margin: 10px 0 15px; }
```
